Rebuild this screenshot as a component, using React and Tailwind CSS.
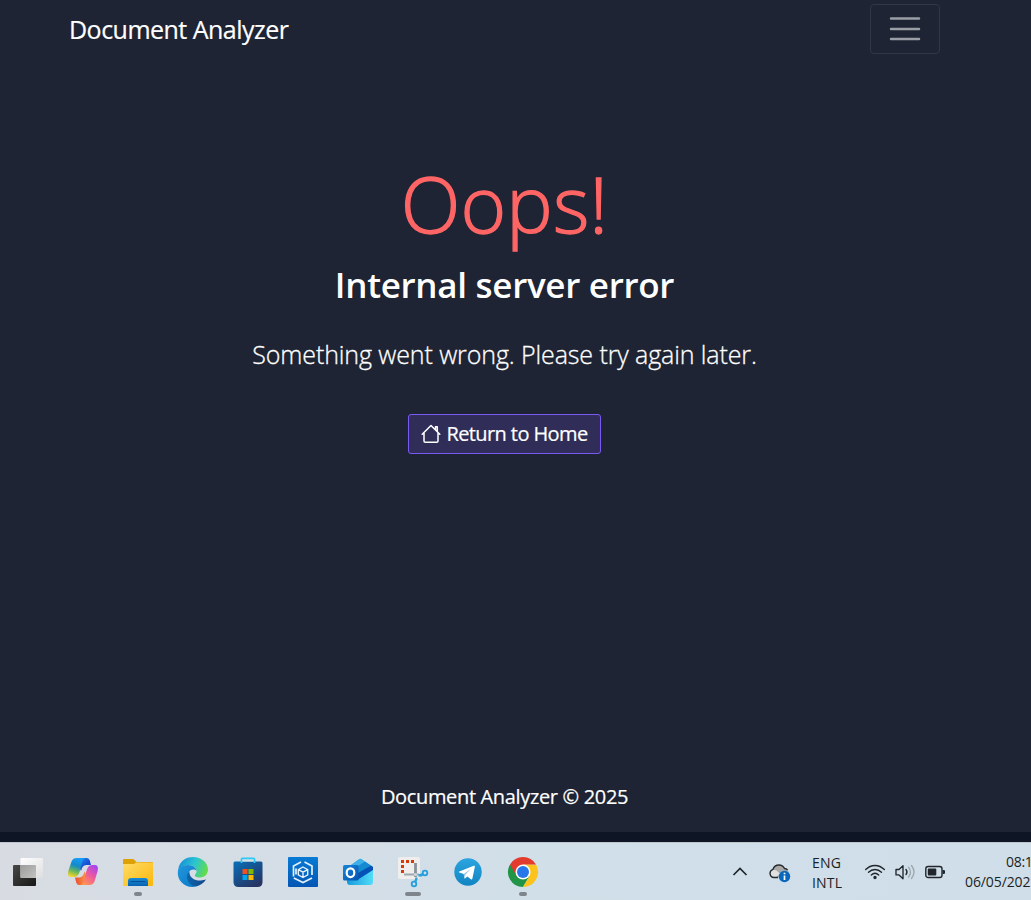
import React from "react";

const icon = "block h-[30px] w-[30px] overflow-visible";

function HomeIcon() {
  return (
    <svg className="-mt-px h-5 w-5 shrink-0" viewBox="0 0 20 20" fill="none" stroke="#fff" strokeWidth="1.500" strokeLinejoin="round" strokeLinecap="round">
      <path d="M1.200 10.200 10 1.500l8.800 8.700M3 9v8q0 1.300 1.300 1.300h11.400q1.300 0 1.300-1.300V9M14.500 5.500V2.700h1.800v4.500" />
    </svg>
  );
}

function TaskView() {
  return (
    <svg className={icon} viewBox="0 0 30 30">
      <defs>
        <linearGradient id="tvDark" x2="1" y2="1"><stop stopColor="#484745" /><stop offset="1" stopColor="#171717" /></linearGradient>
        <linearGradient id="tvLight" x2="1" y2="1"><stop stopColor="#fff" /><stop offset="1" stopColor="#dedede" /></linearGradient>
        <linearGradient id="tvMid" x2="1" y2="1"><stop stopColor="#9d9d9c" /><stop offset="1" stopColor="#c2c2c1" /></linearGradient>
      </defs>
      <rect y="8" width="23" height="21" rx="1" fill="url(#tvDark)" />
      <rect x="7.500" y="1" width="22.500" height="20" rx="1" fill="url(#tvLight)" />
      <path d="M7.500 8H22q1 0 1 1v12H8.500q-1 0-1-1z" fill="url(#tvMid)" />
    </svg>
  );
}

function Copilot() {
  return (
    <svg className={icon} viewBox="0 0 30 30">
      <defs>
        <linearGradient id="cpA" x1=".6" y1="0" x2=".3" y2="1"><stop stopColor="#159dfa" /><stop offset=".4" stopColor="#1689c8" /><stop offset=".7" stopColor="#67b75b" /><stop offset="1" stopColor="#f4d52c" /></linearGradient>
        <linearGradient id="cpB" x1=".8" y1="0" x2=".2" y2="1"><stop stopColor="#a544f3" /><stop offset=".5" stopColor="#ef5b9c" /><stop offset="1" stopColor="#ff974f" /></linearGradient>
        <linearGradient id="cpC" x2="1" y2="1"><stop stopColor="#1f9ce9" /><stop offset=".6" stopColor="#164bd5" /><stop offset="1" stopColor="#2054d8" /></linearGradient>
        <linearGradient id="cpD" x2="1"><stop stopColor="#eb4c31" /><stop offset="1" stopColor="#ffad4a" /></linearGradient>
      </defs>
      <path d="M9 1h10q2 0 2.800 2.500L23 8h-4.500q-3 0-4.500 3l-1 3-4-8z" fill="url(#cpC)" />
      <path d="M21 28H11q-2 0-2.800-2.500L7 20.500h4q3 0 4.500-3l1-3 4 8z" fill="url(#cpD)" />
      <path d="M9 1h8c-2.700 1-3.100 4.500-4.300 9.500-1.600 7-2.800 9.500-7 9.500H3c-3 0-3.500-3-2.500-6.500l3-9C4.500 2 6 1 9 1z" fill="url(#cpA)" />
      <path d="M21 28h-8c2.700-1 3.100-4.500 4.300-9.500 1.600-7 2.800-10.500 7-10.500H27c3 0 3.500 3 2.500 6.500l-3 10c-1 2.500-2.500 3.500-5.500 3.500z" fill="url(#cpB)" />
    </svg>
  );
}

function Explorer() {
  return (
    <svg className={icon} viewBox="0 0 30 30">
      <defs>
        <linearGradient id="fo" x2="1" y2="1"><stop stopColor="#ffdc68" /><stop offset="1" stopColor="#fab70b" /></linearGradient>
        <linearGradient id="fb" y2="1" x2="0"><stop stopColor="#168bd7" /><stop offset="1" stopColor="#0962b2" /></linearGradient>
      </defs>
      <path d="M0 3q0-1 1-1h9q1 0 2 1.500L13.500 5H29q1 0 1 1v6H0z" fill="#dda104" />
      <path d="M0 7h11l2-1.500h17V28q0 1-1 1H1q-1 0-1-1z" fill="url(#fo)" />
      <path d="M5 29v-5q0-3 3-3h14q3 0 3 3v5z" fill="url(#fb)" />
      <path d="M8 24.500h14" stroke="#064f91" strokeLinecap="round" />
    </svg>
  );
}

function Edge() {
  return (
    <svg className={icon} viewBox="0 0 30 30">
      <defs>
        <linearGradient id="edTop" x1="0" y1=".3" x2="1" y2=".6"><stop stopColor="#158fd9" /><stop offset=".5" stopColor="#2ac4d2" /><stop offset="1" stopColor="#66dd45" /></linearGradient>
        <linearGradient id="edLeft" x2="1" y2="1"><stop stopColor="#2297dc" /><stop offset="1" stopColor="#0878c7" /></linearGradient>
        <linearGradient id="edLow" x2="1"><stop stopColor="#0d65ab" /><stop offset="1" stopColor="#124689" /></linearGradient>
      </defs>
      <path d="M.3 12C1.500 4.500 7.500 0 15 0c8.500 0 15 5.800 15 12.500 0 5-3.700 8-8 8-4.200 0-5.500-1.500-5-2.800 1-1.300 1.600-2 1.600-3.700 0-3.300-3.500-6.100-8-6.100-4.700 0-8.200 1.800-10.300 4.100z" fill="url(#edTop)" />
      <path d="M.3 12c2-2.700 5.700-4.200 10-4.100 4.500 0 8.100 2.800 8.300 5.800-2-2-6-1.700-7.600 1.200C8 20 11.500 27 18 29.600 8 32-1.500 24-.1 14z" fill="url(#edLeft)" />
      <path d="M11.400 14.500C7 18 8.500 28 18 29.600c4-.8 7.800-3.300 10-7-1-.2-2.600 1-5.400 1-7.200 0-11.500-3.600-11.200-9.100z" fill="url(#edLow)" />
    </svg>
  );
}

function Store() {
  return (
    <svg className={icon} viewBox="0 0 30 30">
      <defs><linearGradient id="st" x2=".7" y2="1"><stop stopColor="#0870b9" /><stop offset="1" stopColor="#263463" /></linearGradient></defs>
      <path d="M.5 6q0-1.500 1.500-1.500h26q1.500 0 1.500 1.500v19q0 5-5 5h-19q-5 0-5-5z" fill="url(#st)" />
      <path d="M8.500 6V2.500q0-1 1-1h11q1 0 1 1V6" fill="none" stroke="#2bcaf7" strokeWidth="1.800" />
      <path d="M9.500 2.500h11v2h-11z" fill="#d5e0e7" />
      <path d="M9.500 12h5v5h-5z" fill="#f25022" /><path d="M15.500 12h5v5h-5z" fill="#7fba00" />
      <path d="M9.500 18h5v5h-5z" fill="#00a4ef" /><path d="M15.500 18h5v5h-5z" fill="#ffb900" />
    </svg>
  );
}

function CubeApp() {
  return (
    <svg className={icon} viewBox="0 0 30 30">
      <defs><linearGradient id="cube" x2="0" y2="1"><stop stopColor="#087bd5" /><stop offset="1" stopColor="#0556b3" /></linearGradient></defs>
      <rect width="30" height="30" rx="1" fill="url(#cube)" />
      <g fill="none" stroke="#e4f1fb" strokeWidth="1.700">
        <path d="m15 10 4.700 2.600v5.300L15 20.500l-4.700-2.600v-5.300zM10.300 12.600l4.700 2.600 4.700-2.600M15 15.200v5.300" strokeWidth="1.400" />
        <path d="M13 5 5.500 9v10.500M8 17.500v-6M16.500 5 24 9v9M5.800 21 15 25.500l9-4.600" />
      </g>
    </svg>
  );
}

function Outlook() {
  return (
    <svg className={icon} viewBox="0 0 30 30">
      <defs>
        <linearGradient id="ol" x2="1" y2="1"><stop stopColor="#1685d9" /><stop offset="1" stopColor="#0754ae" /></linearGradient>
        <linearGradient id="olb" x2="1"><stop stopColor="#169bdc" /><stop offset="1" stopColor="#52dcf8" /></linearGradient>
      </defs>
      <path d="M4 11 16 2.200q1.300-.8 2.600 0L30 10v15q0 3-3 3H7q-3 0-3-3z" fill="url(#olb)" />
      <path d="m4 11 12-8.800q1.300-.8 2.600 0L22 4.500 9 14H4z" fill="#3daee7" />
      <path d="m22 4.500 6 4L15 18V9z" fill="#1689d3" />
      <path d="m28 8.500 2 1.500v3L15 22.500V16z" fill="#0651b5" />
      <rect y="8" width="15.500" height="15.500" rx="1.500" fill="url(#ol)" />
      <ellipse cx="7.500" cy="15.700" rx="3.800" ry="4.400" fill="none" stroke="#fff" strokeWidth="2.200" />
    </svg>
  );
}

function Snip() {
  return (
    <svg className={icon} viewBox="0 0 30 30">
      <rect width="22" height="22" rx="2" fill="#f0eeec" />
      <path d="M3 3h3v3H3zM8 3h3v3H8zM13 3h3v3h-3zM3 8h3v3H3zM3 13h3v3H3z" fill="#d43b08" />
      <path d="M17.500 6v14" stroke="#85929a" strokeWidth="2.800" /><path d="M6 17.500h15" stroke="#9ca8ae" strokeWidth="2" />
      <circle cx="17.500" cy="17.500" r="1.600" fill="#d0d6d9" />
      <path d="M20.500 18.500q3 0 4.500-1.500M18.500 20.500q0 2.500-1.500 4.500" fill="none" stroke="#28a5df" strokeWidth="2.500" />
      <circle cx="27" cy="16" r="2.300" fill="none" stroke="#239fdd" strokeWidth="1.800" />
      <circle cx="16" cy="27" r="2.300" fill="none" stroke="#239fdd" strokeWidth="1.800" />
    </svg>
  );
}

function Telegram() {
  return (
    <svg className={icon} viewBox="0 0 30 30">
      <defs><linearGradient id="tg" x2="0" y2="1"><stop stopColor="#2ba4df" /><stop offset="1" stopColor="#1185c2" /></linearGradient></defs>
      <circle cx="15" cy="15" r="13.700" fill="url(#tg)" />
      <path d="m6.300 14.400 14.500-5.700c.7-.2 1.200.3 1 1.200l-2.400 11.700c-.2 1-.8 1.100-1.500.6l-3.700-2.700-1.900 1.800c-.4.4-.8.3-.9-.4l-.7-4-4.300-1.400c-.8-.3-.8-.8-.1-1.100z" fill="#fff" />
      <path d="m10.700 16.900 7.200-5.200-5.600 6-.5 3.200z" fill="#8fc6e5" />
    </svg>
  );
}

function Chrome() {
  return (
    <svg className={icon} viewBox="0 0 30 30">
      <path d="M15 15 2 7.500a15 15 0 0 0 13 22.500l6.500-11z" fill="#219547" />
      <path d="M15 15h-1l7.500 4L15 30A15 15 0 0 0 28 7.500H15z" fill="#fcc31c" />
      <path d="M15 15 8.500 18.700 2 7.500a15 15 0 0 1 26 0H15z" fill="#e33b2e" />
      <circle cx="15" cy="15" r="7.500" fill="#fff" /><circle cx="15" cy="15" r="6" fill="#2877ea" />
    </svg>
  );
}

const apps = [
  [TaskView, ""], [Copilot, ""], [Explorer, "w-2"], [Edge, ""], [Store, ""], [CubeApp, ""],
  [Outlook, ""], [Snip, "w-4"], [Telegram, ""], [Chrome, "w-2"],
];

function Tray() {
  return (
    <div className="flex h-full shrink-0 items-start font-['Open_Sans',sans-serif] text-[14px] leading-5 text-[#1b1e22]">
      <svg className="mt-[21px] h-4 w-4" viewBox="0 0 16 16" fill="none" stroke="#20262b" strokeWidth="1.700"><path d="m1.500 11 6.500-6.500 6.500 6.500" /></svg>
      <svg className="ml-[21px] mt-[19px] h-[22px] w-[22px]" viewBox="0 0 22 22">
        <path d="M6.500 15.500H5a4.200 4.200 0 0 1-1-8.200C5 3.800 8 3 10 3c3 0 4.500 1.500 5.500 3.500 3 0 4 2 4 4l-2 5z" fill="#a8a8a8" />
        <path d="M6.500 15.500H5q-4-.3-4-4c0-3 2.500-4 4.500-3.600 3 .2 4 3 6 3.600z" fill="#e1e1e1" />
        <path d="M9 15.500H5a4.200 4.200 0 0 1-1-8.200C5 3.800 8 3 10 3c3 0 4.500 1.500 5.500 3.500q2 0 3 1.500" fill="none" stroke="#272b30" strokeWidth="1.400" />
        <circle cx="15.500" cy="14.500" r="5.700" fill="#0868bd" /><path d="M15.500 13.500v4.500M15.500 10.700v1.600" stroke="#fff" strokeWidth="1.700" />
      </svg>
      <div className="ml-[21px] mt-[10px] w-[35px] tracking-[0.2px]"><div>ENG</div><div>INTL</div></div>
      <svg className="ml-[18px] mt-[19px] h-5 w-5" viewBox="0 0 20 20" fill="none" stroke="#20262b" strokeWidth="1.350" strokeLinecap="round">
        <path d="M.7 7.500c5.300-5.400 13.300-5.400 18.600 0M3.500 10.300c3.800-3.800 9.200-3.800 13 0M6.300 13c2.200-2.100 5.200-2.100 7.400 0" /><circle cx="10" cy="15.500" r="1" fill="#20262b" />
      </svg>
      <svg className="ml-[10px] mt-[19px] h-5 w-5" viewBox="0 0 20 20" fill="none" strokeWidth="1.350" strokeLinecap="round" strokeLinejoin="round">
        <path d="M1 7.500h3L8 3.700v13l-4-3.800H1zM11 7.500q2 2.500 0 5" stroke="#20262b" /><path d="M13.500 5.200q4 5 0 9.800M16.500 3.500q5 6.700 0 13" stroke="#9ba7af" />
      </svg>
      <svg className="ml-[10px] mt-[19px] h-5 w-5" viewBox="0 0 20 20"><rect x=".8" y="4.500" width="16.200" height="11" rx="2.300" fill="none" stroke="#20262b" strokeWidth="1.400" /><rect x="2.800" y="6.500" width="8.500" height="7" rx="1" fill="#20262b" /><path d="M17.500 8h1.200q1.300 0 1.300 1v2q0 1-1.300 1h-1.200z" fill="#20262b" /></svg>
      <div className="ml-5 mt-[9px] w-[66px] shrink-0 whitespace-nowrap">
        <div className="pl-[41px] tracking-[-0.3px]">08:1</div><div className="tracking-[-0.1px]">06/05/202</div>
      </div>
    </div>
  );
}

export default function App() {
  return (
    <div className="flex h-[900px] w-[1031px] flex-col overflow-hidden bg-[#1e2433] font-['Open_Sans',sans-serif] text-white">
      <header className="flex h-[58px] w-[1009px] items-center justify-between pl-[69px] pr-[69px]">
        <div className="pb-px text-[25px] leading-[34px] tracking-[-0.52px] [-webkit-text-stroke:0.2px_#fff]">Document Analyzer</div>
        <button aria-label="Menu" className="flex h-[50px] w-[70px] items-center justify-center rounded-[4px] border border-[#323746]">
          <svg className="h-[38px] w-[38px]" viewBox="0 0 38 38" stroke="#9a9da5" strokeWidth="2.500" strokeLinecap="round"><path d="M5 8.500h28M5 19h28M5 29h28" /></svg>
        </button>
      </header>
      <main className="flex h-[774px] w-[1009px] flex-col items-center">
        <h1 className="mt-[93px] h-[108px] text-[78px] font-light leading-[104px] tracking-[0.1px] text-[#ff6565] [-webkit-text-stroke:1.3px_#ff6565]">Oops!</h1>
        <h2 className="mt-[3px] text-[35px] font-semibold leading-[46px] tracking-[-0.3px]">Internal server error</h2>
        <p className="mt-[29px] text-[25px] font-light leading-[34px] tracking-[-0.11px] [-webkit-text-stroke:0.3px_#fff]">Something went wrong. Please try again later.</p>
        <button className="mt-[43px] flex h-10 w-[193px] shrink-0 items-center justify-center gap-[5px] whitespace-nowrap rounded-[3px] border border-[#7958f4] bg-[#302e59] text-[20px] tracking-[-0.6px] [-webkit-text-stroke:0.2px_#fff]">
          <HomeIcon /><span>Return to Home</span>
        </button>
        <footer className="mt-auto mb-[20px] text-[20px] leading-[30px] tracking-[-0.34px] [-webkit-text-stroke:0.2px_#fff]">Document Analyzer © 2025</footer>
      </main>
      <div className="h-[10px] shrink-0 bg-[#0e1524]" />
      <div className="flex h-[58px] shrink-0 justify-between border-t border-[#bfc6cd] bg-linear-to-r from-[#d8dce2] via-[#d1dfe9] to-[#d0deea]">
        <nav className="flex gap-[25px] pl-[13px]">
          {apps.map(([Icon, indicator], i) => (
            <div key={i} className="flex w-[30px] flex-col items-center pt-[14px]">
              <Icon />
              {indicator && <span className={"mt-[5px] h-1 rounded-full bg-[#7e858d] " + indicator} />}
            </div>
          ))}
        </nav>
        <Tray />
      </div>
    </div>
  );
}
